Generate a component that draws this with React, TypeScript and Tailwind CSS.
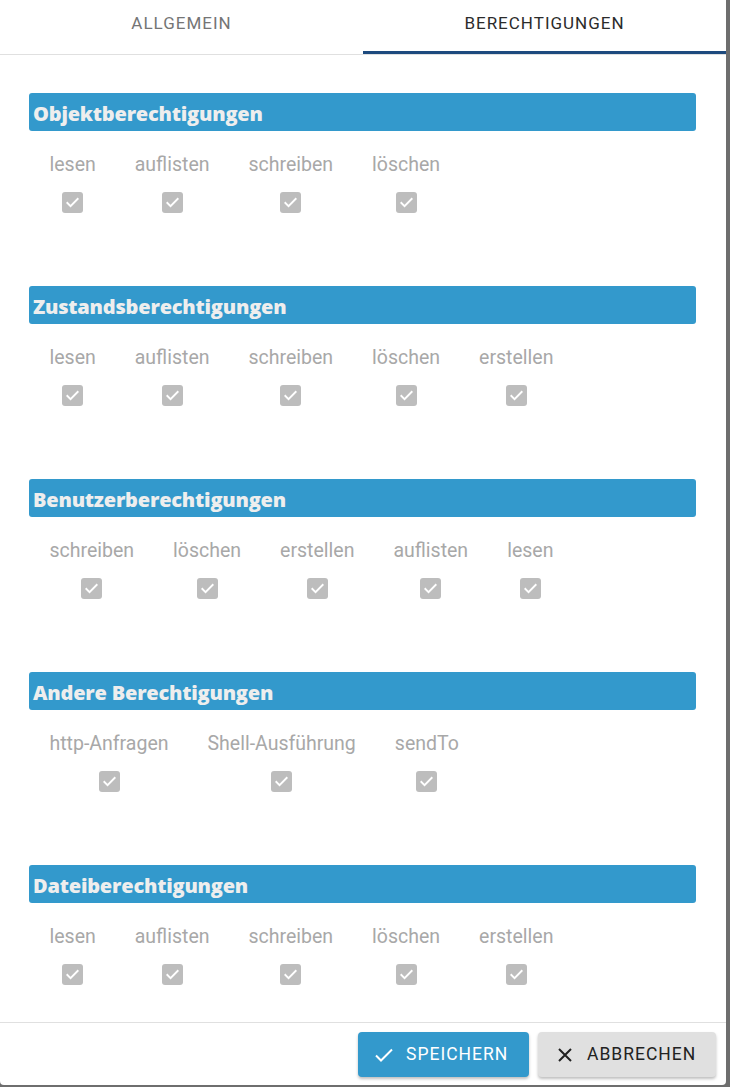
type Section = { title: string; items: string[] };

const sections: Section[] = [
  { title: 'Objektberechtigungen', items: ['lesen', 'auflisten', 'schreiben', 'löschen'] },
  { title: 'Zustandsberechtigungen', items: ['lesen', 'auflisten', 'schreiben', 'löschen', 'erstellen'] },
  { title: 'Benutzerberechtigungen', items: ['schreiben', 'löschen', 'erstellen', 'auflisten', 'lesen'] },
  { title: 'Andere Berechtigungen', items: ['http-Anfragen', 'Shell-Ausführung', 'sendTo'] },
  { title: 'Dateiberechtigungen', items: ['lesen', 'auflisten', 'schreiben', 'löschen', 'erstellen'] },
];

function DisabledCheckbox() {
  return (
    <span className="flex h-[21px] w-[21px] items-center justify-center rounded-[3px] bg-[#bdbdbd]">
      <svg viewBox="0 0 24 24" className="h-[19px] w-[19px]" fill="none" stroke="#ffffff" strokeWidth={2.4} strokeLinecap="square">
        <path d="M5.5 12.5l4 4L18.5 7.5" />
      </svg>
    </span>
  );
}

function PermissionSection({ section }: { section: Section }) {
  return (
    <section className="h-[193px]">
      {/* Header bar */}
      <div className="flex h-[38px] items-center rounded-[3px] bg-[#3399cc] px-1 pt-[3px]">
        <h2 className="font-['Open_Sans',sans-serif] text-[20px] font-extrabold tracking-[-0.2px] text-[#eeeeee]">
          {section.title}
        </h2>
      </div>

      {/* Permission columns */}
      <div className="mt-[22px] flex pl-[1px]">
        {section.items.map((item, i) => (
          <div key={i} className="flex flex-col items-center px-[19.5px]">
            <span className="text-[19.5px] leading-[24px] text-[#a8a8a8]">{item}</span>
            <span className="mt-[15px]">
              <DisabledCheckbox />
            </span>
          </div>
        ))}
      </div>
    </section>
  );
}

export default function App() {
  return (
    <div className="h-[1087px] w-[730px] bg-[#6e6e6e] font-['Roboto',sans-serif]">
      <div className="flex h-[1085px] w-[726px] flex-col rounded-b-[4px] bg-white">
        {/* Tabs */}
        <div className="flex h-[55px] border-b border-[#e0e0e0]">
          <div className="flex flex-1 items-center justify-center pb-[7px] text-[17px] tracking-[1px] text-[#757575]">
            ALLGEMEIN
          </div>
          <div className="flex flex-1 items-center justify-center border-b-[3px] border-[#1d4a7e] pb-[4px] text-[17px] tracking-[1px] text-[#2b2b2b]">
            BERECHTIGUNGEN
          </div>
        </div>

        {/* Content */}
        <div className="flex-1 overflow-hidden pl-[29px] pr-[30px] pt-[38px]">
          {sections.map((s) => (
            <PermissionSection key={s.title} section={s} />
          ))}
        </div>

        {/* Footer */}
        <div className="flex h-[63px] justify-end gap-[9px] border-t border-[#e0e0e0] pr-[10px] pt-[9px]">
          <button className="flex h-[45px] w-[171px] items-center gap-[13px] rounded-[4px] bg-[#3399cc] pl-[17px] text-[17.5px] tracking-[1px] text-white shadow-[0_2px_3px_rgba(0,0,0,0.25)]">
            <svg viewBox="0 0 18 14" className="h-[14px] w-[18px]" fill="none" stroke="currentColor" strokeWidth={2}>
              <path d="M1 7.5l5 5L17 1.5" />
            </svg>
            SPEICHERN
          </button>
          <button className="flex h-[45px] w-[178px] items-center gap-[15px] rounded-[4px] bg-[#e0e0e0] pl-[20px] text-[17.5px] tracking-[1px] text-[#222] shadow-[0_2px_3px_rgba(0,0,0,0.25)]">
            <svg viewBox="0 0 14 14" className="h-[14px] w-[14px]" fill="none" stroke="currentColor" strokeWidth={2}>
              <path d="M1 1l12 12M13 1L1 13" />
            </svg>
            ABBRECHEN
          </button>
        </div>
      </div>
    </div>
  );
}
